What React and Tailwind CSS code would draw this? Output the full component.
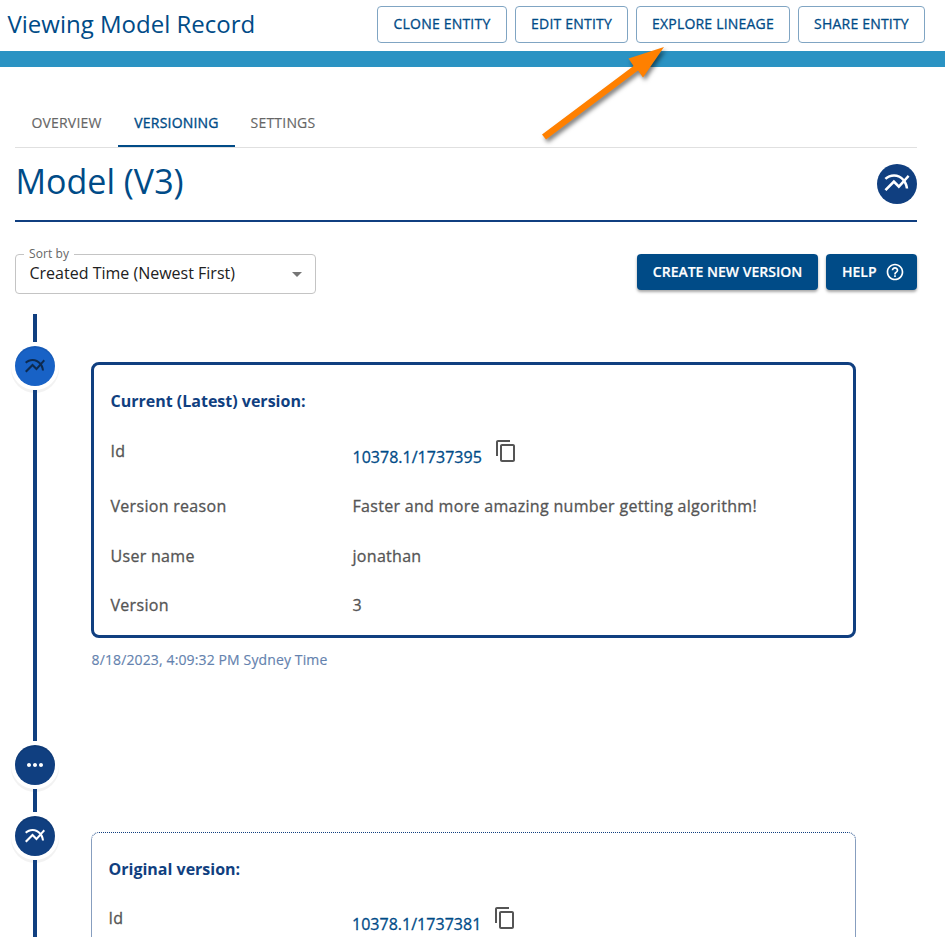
import React from "react";
import {
  MdMultilineChart,
  MdContentCopy,
  MdHelpOutline,
  MdMoreHoriz,
  MdArrowDropDown,
} from "react-icons/md";

function OutlineButton({ className, children }) {
  return (
    <button
      className={`h-[37px] shrink-0 whitespace-nowrap rounded border border-[#80a5c3] pb-0.5 text-center text-[14px] leading-[24px] tracking-[0.2px] text-[#004b87] [-webkit-text-stroke:0.3px] ${className}`}
    >
      {children}
    </button>
  );
}

function Tab({ active, className, children }) {
  return (
    <div
      className={`flex h-12 items-center justify-center whitespace-nowrap text-[14px] leading-[18px] tracking-[0.2px] ${
        active
          ? "border-b-2 border-[#004b87] pt-0.5 text-[#004b87] [-webkit-text-stroke:0.35px]"
          : "text-[#666666] [-webkit-text-stroke:0.15px]"
      } ${className}`}
    >
      {children}
    </div>
  );
}

function Dot({ className, children }) {
  return (
    <div
      className={`my-1 flex size-10 shrink-0 items-center justify-center rounded-full shadow-[0_0_0_4px_#fff,inset_0_2px_0_rgba(0,0,0,0.08),0_3px_0_4px_rgba(0,0,0,0.05)] ${className}`}
    >
      {children}
    </div>
  );
}

function Line({ className }) {
  return <div className={`w-1 bg-[#103f80] ${className}`} />;
}

function Field({ label, className, children }) {
  return (
    <div
      className={`flex whitespace-nowrap tracking-[0.3px] [-webkit-text-stroke:0.3px] ${className}`}
    >
      <div className="w-[242px] shrink-0">{label}</div>
      <div>{children}</div>
    </div>
  );
}

function IdValue({ id, iconClass }) {
  return (
    <div className="flex">
      <span className="pt-1.5 tracking-[0.02px] text-[#004b87]">{id}</span>
      <MdContentCopy className={`size-6 text-[#555555] ${iconClass}`} />
    </div>
  );
}

export default function App() {
  return (
    <div className="h-[937px] w-[945px] overflow-hidden bg-white font-['Open_Sans',sans-serif]">
      <header className="relative">
        <div className="flex h-[51px] items-start justify-between pl-[7.5px] pr-5 pt-1.5">
          <h1 className="whitespace-nowrap text-[24px] leading-[36px] text-[#004b87]">
            Viewing Model Record
          </h1>
          <div className="flex gap-2">
            <OutlineButton className="w-[130px]">CLONE ENTITY</OutlineButton>
            <OutlineButton className="w-[113px]">EDIT ENTITY</OutlineButton>
            <OutlineButton className="w-[154px]">EXPLORE LINEAGE</OutlineButton>
            <OutlineButton className="w-[127px]">SHARE ENTITY</OutlineButton>
          </div>
        </div>
        <div className="h-4 bg-[#2b93c3]" />
        <svg
          className="absolute left-[530px] top-[35px] drop-shadow-[2px_3px_2px_rgba(0,0,0,0.5)]"
          width="150"
          height="120"
          viewBox="530 35 150 120"
        >
          <path
            d="M542 134.5 L633.5 66 L628.5 58.5 L664 47 L643 77.5 L638 70.5 L546 139.5 Z"
            fill="#ff8000"
          />
        </svg>
      </header>

      <main className="ml-[15px] w-[902px] pt-8">
        <nav className="flex h-[49px] border-b border-[#e0e0e0]">
          <Tab className="w-[103px]">OVERVIEW</Tab>
          <Tab active className="w-[117px]">
            VERSIONING
          </Tab>
          <Tab className="w-[96px]">SETTINGS</Tab>
        </nav>

        <div className="flex h-[74px] items-center justify-between border-b-2 border-[#103f80]">
          <h2 className="whitespace-nowrap pb-1.5 pl-[0.5px] text-[34px] leading-[42px] text-[#004b87]">
            Model (V3)
          </h2>
          <div className="flex size-10 items-center justify-center rounded-full bg-[#103f80] pb-0.5 text-white">
            <MdMultilineChart className="size-[30px]" />
          </div>
        </div>

        <div className="flex h-[92px] items-start justify-between pt-[23px]">
          <fieldset className="h-[49px] w-[301px] rounded border border-[#c4c4c4] pl-2">
            <legend className="h-[18px] px-[5px] text-[12px] leading-[18px] tracking-[0.1px] text-[#666666]">
              Sort by
            </legend>
            <div className="flex items-center justify-between pl-[5.5px] pr-1.5">
              <span className="-mt-[3px] whitespace-nowrap text-[16px] leading-[24px] text-[#212121]">
                Created Time (Newest First)
              </span>
              <MdArrowDropDown className="-mt-px size-6 text-[#757575]" />
            </div>
          </fieldset>
          <div className="mt-[9px] flex gap-2">
            <button className="h-9 w-[181px] whitespace-nowrap rounded bg-[#004b87] pb-0.5 text-[14px] font-semibold text-white shadow-[0_2px_3px_rgba(0,0,0,0.35)] [-webkit-text-stroke:0.2px]">
              CREATE NEW VERSION
            </button>
            <button className="flex h-9 w-[91px] items-center justify-between rounded bg-[#004b87] pl-4 pr-3 text-[14px] font-semibold text-white shadow-[0_2px_3px_rgba(0,0,0,0.35)]">
              <span className="pb-0.5 [-webkit-text-stroke:0.2px]">HELP</span>
              <MdHelpOutline className="size-5" />
            </button>
          </div>
        </div>

        <section className="text-[16px] leading-[24px] text-[#555555]">
          <div className="flex h-[427px]">
            <div className="flex w-10 flex-col items-center">
              <Line className="h-7" />
              <Dot className="bg-[#1862c6] text-[#0d2a50]">
                <MdMultilineChart className="size-6" />
              </Dot>
              <Line className="flex-1" />
            </div>
            <div className="ml-9 pt-12">
              <article className="h-[276px] w-[765px] rounded-lg border-[3px] border-[#103f80] pl-[16.5px] pt-6">
                <h3 className="font-bold text-[#103f80]">Current (Latest) version:</h3>
                <Field label="Id" className="mt-[26px] h-[55px]">
                  <IdValue id="10378.1/1737395" iconClass="ml-3" />
                </Field>
                <Field label="Version reason" className="h-[50px]">
                  Faster and more amazing number getting algorithm!
                </Field>
                <Field label="User name" className="h-[49px]">
                  jonathan
                </Field>
                <Field label="Version">3</Field>
              </article>
              <p className="mt-[11px] pl-[0.5px] text-[14px] leading-[22px] tracking-[0.13px] text-[#6482ae] [-webkit-text-stroke:0.15px]">
                8/18/2023, 4:09:32 PM Sydney Time
              </p>
            </div>
          </div>

          <div className="flex w-10 flex-col items-center">
            <Dot className="bg-[#103f80] text-white">
              <MdMoreHoriz className="size-6" />
            </Dot>
            <Line className="h-[23px]" />
          </div>

          <div className="flex h-[125px]">
            <div className="flex w-10 flex-col items-center">
              <Dot className="bg-[#103f80] text-white">
                <MdMultilineChart className="size-6" />
              </Dot>
              <Line className="flex-1" />
            </div>
            <div className="ml-9 pt-5">
              <article className="h-[250px] w-[765px] rounded-lg border border-dotted border-[#103f80] pl-[16.5px] pt-6">
                <h3 className="font-bold text-[#103f80]">Original version:</h3>
                <Field label="Id" className="mt-[25px]">
                  <div className="pl-[1.5px]">
                    <IdValue id="10378.1/1737381" iconClass="ml-[11.5px]" />
                  </div>
                </Field>
              </article>
            </div>
          </div>
        </section>
      </main>
    </div>
  );
}
